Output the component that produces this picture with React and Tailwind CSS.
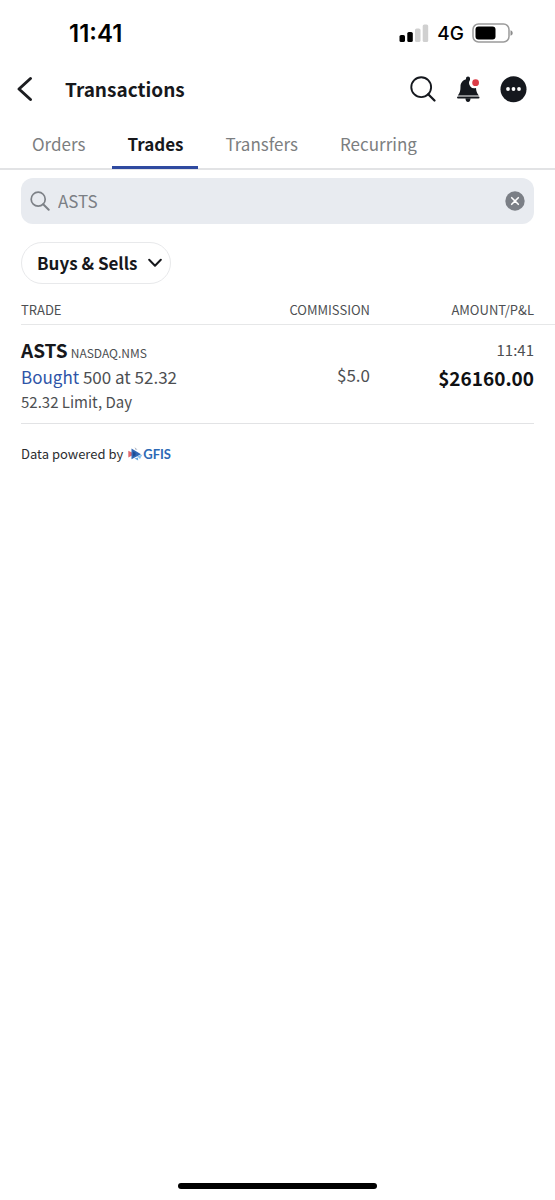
import React, { useState } from "react";

const TABS = ["Orders", "Trades", "Transfers", "Recurring"];

const TRADES = [
  {
    symbol: "ASTS",
    exchange: "NASDAQ.NMS",
    side: "Bought",
    fill: "500 at 52.32",
    terms: "52.32 Limit, Day",
    commission: "$5.0",
    time: "11:41",
    amount: "$26160.00",
  },
];

function StatusBar() {
  return (
    <div className="flex h-[66px] items-center justify-between pl-[69px] pr-[42px] font-['Inter',sans-serif] text-black">
      <span className="pt-0.5 text-[24px] font-semibold leading-none">11:41</span>
      <div className="flex items-center gap-2">
        <svg width="30" height="18" viewBox="0 0 30 18" aria-hidden="true">
          <rect x="0.5" y="11" width="5.5" height="7" rx="1.6" fill="#000" />
          <rect x="8.3" y="8" width="5.5" height="10" rx="1.6" fill="#000" />
          <rect x="16" y="4.5" width="5.5" height="13.5" rx="1.6" fill="#d0d0d0" />
          <rect x="23.7" y="0.5" width="5.5" height="17.5" rx="1.6" fill="#d0d0d0" />
        </svg>
        <span className="text-[19px] font-medium leading-none">4G</span>
        <svg width="41" height="20" viewBox="0 0 41 20" aria-hidden="true">
          <rect x="1" y="1" width="36" height="18" rx="5.5" fill="#fff" stroke="#9b9b9b" strokeWidth="1.5" />
          <rect x="3.5" y="3.5" width="20" height="13" rx="3" fill="#000" />
          <path d="M38.500 7.200c1.400.5 2.200 1.500 2.200 2.800s-.8 2.300-2.200 2.800z" fill="#8c8c8c" />
        </svg>
      </div>
    </div>
  );
}

function Header() {
  return (
    <header className="flex h-[46px] items-center pl-4 pr-7">
      <button type="button" aria-label="Back" className="mr-8">
        <svg width="17" height="26" viewBox="0 0 17 26" fill="none" aria-hidden="true">
          <path d="M14.5 2.5 3 13l11.5 10.5" stroke="#1c1d20" strokeWidth="3" strokeLinecap="round" strokeLinejoin="round" />
        </svg>
      </button>
      <h1 className="text-[19px] font-bold leading-6 text-[#17181c]">Transactions</h1>
      <div className="ml-auto flex items-center gap-[19px]">
        <button type="button" aria-label="Search">
          <svg width="27" height="27" viewBox="0 0 27 27" fill="none" stroke="#15181e" aria-hidden="true">
            <circle cx="11.2" cy="11.2" r="9.9" strokeWidth="1.9" />
            <path d="m18.2 18.2 6.3 6.3" strokeWidth="2.3" strokeLinecap="round" />
          </svg>
        </button>
        <button type="button" aria-label="Notifications">
          <svg width="25" height="27" viewBox="0 0 25 27" aria-hidden="true">
            <path
              d="M12 .5c-1.200 0-2 .8-2 2v.8C6.700 4.300 4.500 7 4.500 10.500c0 4-.5 6.200-2.700 8.900h21c-1.900-2.300-2.600-4.200-2.800-7.400a5.300 5.300 0 0 1-6-8V2.500c0-1.200-.8-2-2-2z"
              fill="#15181e"
            />
            <rect x="1" y="20.4" width="22.5" height="2.2" rx="1.1" fill="#15181e" />
            <path d="M9.5 22.3h5c0 2.300-.9 3.800-2.500 3.800s-2.500-1.500-2.500-3.800z" fill="#15181e" />
            <circle cx="19.6" cy="6.700" r="3.400" fill="#dc3d48" />
          </svg>
        </button>
        <button type="button" aria-label="More">
          <svg width="27" height="27" viewBox="0 0 27 27" aria-hidden="true">
            <circle cx="13.5" cy="13.2" r="13" fill="#15181e" />
            <circle cx="8" cy="13" r="1.9" fill="#fff" />
            <circle cx="13.5" cy="13" r="1.9" fill="#fff" />
            <circle cx="19" cy="13" r="1.9" fill="#fff" />
          </svg>
        </button>
      </div>
    </header>
  );
}

function Tabs({ active, onChange }) {
  return (
    <nav className="flex gap-3 border-b-2 border-[#e2e3e5] px-[17px]" role="tablist">
      {TABS.map((tab) => (
        <button
          key={tab}
          type="button"
          role="tab"
          aria-selected={tab === active}
          onClick={() => onChange(tab)}
          className={
            tab === active
              ? "-mb-px h-[57px] border-b-3 border-[#2f4aa0] px-[15px] pt-2.5 text-[17px] font-bold leading-6 text-[#17181c]"
              : "-mb-px h-[57px] border-b-3 border-transparent px-[15px] pt-2.5 text-[17px] leading-6 text-[#7c7e80]"
          }
        >
          {tab}
        </button>
      ))}
    </nav>
  );
}

function SearchBox({ value, onChange }) {
  return (
    <div className="mx-[21px] mt-2 flex h-[46px] items-center gap-2 rounded-xl bg-[#e8ebf0] px-[9px]">
      <svg width="20" height="20" viewBox="0 0 20 20" fill="none" stroke="#7d8187" aria-hidden="true">
        <circle cx="8.2" cy="8.2" r="7" strokeWidth="1.7" />
        <path d="m13.2 13.2 5.5 5.5" strokeWidth="2" strokeLinecap="round" />
      </svg>
      <input
        type="text"
        aria-label="Search trades"
        value={value}
        onChange={(e) => onChange(e.target.value)}
        className="min-w-0 flex-1 bg-transparent text-[17px] leading-6 text-[#7b7f85] outline-none"
      />
      <button type="button" aria-label="Clear search" onClick={() => onChange("")}>
        <svg width="20" height="20" viewBox="0 0 20 20" fill="none" aria-hidden="true">
          <circle cx="10" cy="10" r="9.7" fill="#7b7f86" />
          <path d="m6.7 6.7 6.6 6.6m0-6.6-6.6 6.6" stroke="#fff" strokeWidth="1.6" strokeLinecap="round" />
        </svg>
      </button>
    </div>
  );
}

function TradesTable() {
  return (
    <table className="ml-[21px] mt-3 w-[calc(100%-21px)] border-collapse text-[#4d4f52]">
      <thead>
        <tr className="h-7 border-b border-[#e6e7e8] text-[13px] leading-5">
          <th className="p-0 text-left font-normal">TRADE</th>
          <th className="w-[100px] p-0 text-right font-normal">COMMISSION</th>
          <th className="w-[185px] p-0 pr-[21px] text-right font-normal">AMOUNT/P&amp;L</th>
        </tr>
      </thead>
      <tbody>
        {TRADES.map((trade) => (
          <tr key={trade.symbol} className="h-[99px]">
            <td className="p-0 pt-[11px] align-top">
              <div className="flex items-baseline gap-[3px]">
                <span className="text-[19px] font-bold leading-7 text-[#17181c]">{trade.symbol}</span>
                <span className="text-[12px] leading-4">{trade.exchange}</span>
              </div>
              <div className="text-[17px] leading-[26px]">
                <span className="text-[#2f55a8]">{trade.side}</span> {trade.fill}
              </div>
              <div className="text-[15px] leading-6">{trade.terms}</div>
            </td>
            <td className="p-0 pt-[38px] text-right align-top text-[17px] leading-6">{trade.commission}</td>
            <td className="p-0 pr-[21px] pt-[11px] text-right align-top">
              <div className="text-[15px] leading-7">{trade.time}</div>
              <div className="text-[19px] font-bold leading-7 text-[#101113]">{trade.amount}</div>
            </td>
          </tr>
        ))}
      </tbody>
    </table>
  );
}

function DataCredit() {
  return (
    <div className="mx-[21px] flex items-center border-t border-[#e2e3e5] pt-5 text-[13px] leading-5 text-[#2b2d30]">
      <span>Data powered by</span>
      <svg className="ml-[5px]" width="15" height="14" viewBox="0 0 15 14" aria-hidden="true">
        <path d="M.3 3.8 4 5.5v3l-3.700 2z" fill="#df6b70" />
        <path d="m3.5 1.5 9.500 5.700-9.500 5z" fill="#2f67b5" />
        <path d="m5 4.5 2.500 1.300v2.500L5 9.500z" fill="#1d4c94" />
        <path d="m6.5.3 3 2.200-2 .2z" fill="#a9b3c2" />
        <path d="m9 9.3 5.500-1.800-2.500 4.500z" fill="#8bc4f0" />
        <path d="m6.5 11.5 3.500-1 .2 3z" fill="#65a8e3" />
      </svg>
      <span className="font-['Lato',sans-serif] text-[13px] font-bold leading-5 text-[#2c69b5]">GFIS</span>
    </div>
  );
}

export default function App() {
  const [tab, setTab] = useState("Trades");
  const [query, setQuery] = useState("ASTS");

  return (
    <div className="flex min-h-screen flex-col bg-white font-['Noto_Sans_CJK_SC','Noto_Sans',sans-serif]">
      <StatusBar />
      <Header />
      <Tabs active={tab} onChange={setTab} />
      <main>
        <SearchBox value={query} onChange={setQuery} />
        <button
          type="button"
          className="ml-[21px] mt-[18px] flex h-[42px] items-center gap-2.5 rounded-full border border-[#e8e9eb] pl-[15px] pr-2 text-[17px] font-bold leading-6 text-[#17181c]"
        >
          Buys &amp; Sells
          <svg width="14" height="10" viewBox="0 0 14 10" fill="none" aria-hidden="true">
            <path d="m1.2 1.8 5.8 5.9 5.8-5.9" stroke="#17181c" strokeWidth="2" strokeLinecap="round" strokeLinejoin="round" />
          </svg>
        </button>
        <TradesTable />
        <DataCredit />
      </main>
      <div className="mx-auto mb-[11px] mt-auto h-1.5 w-[199px] rounded-full bg-black" />
    </div>
  );
}
